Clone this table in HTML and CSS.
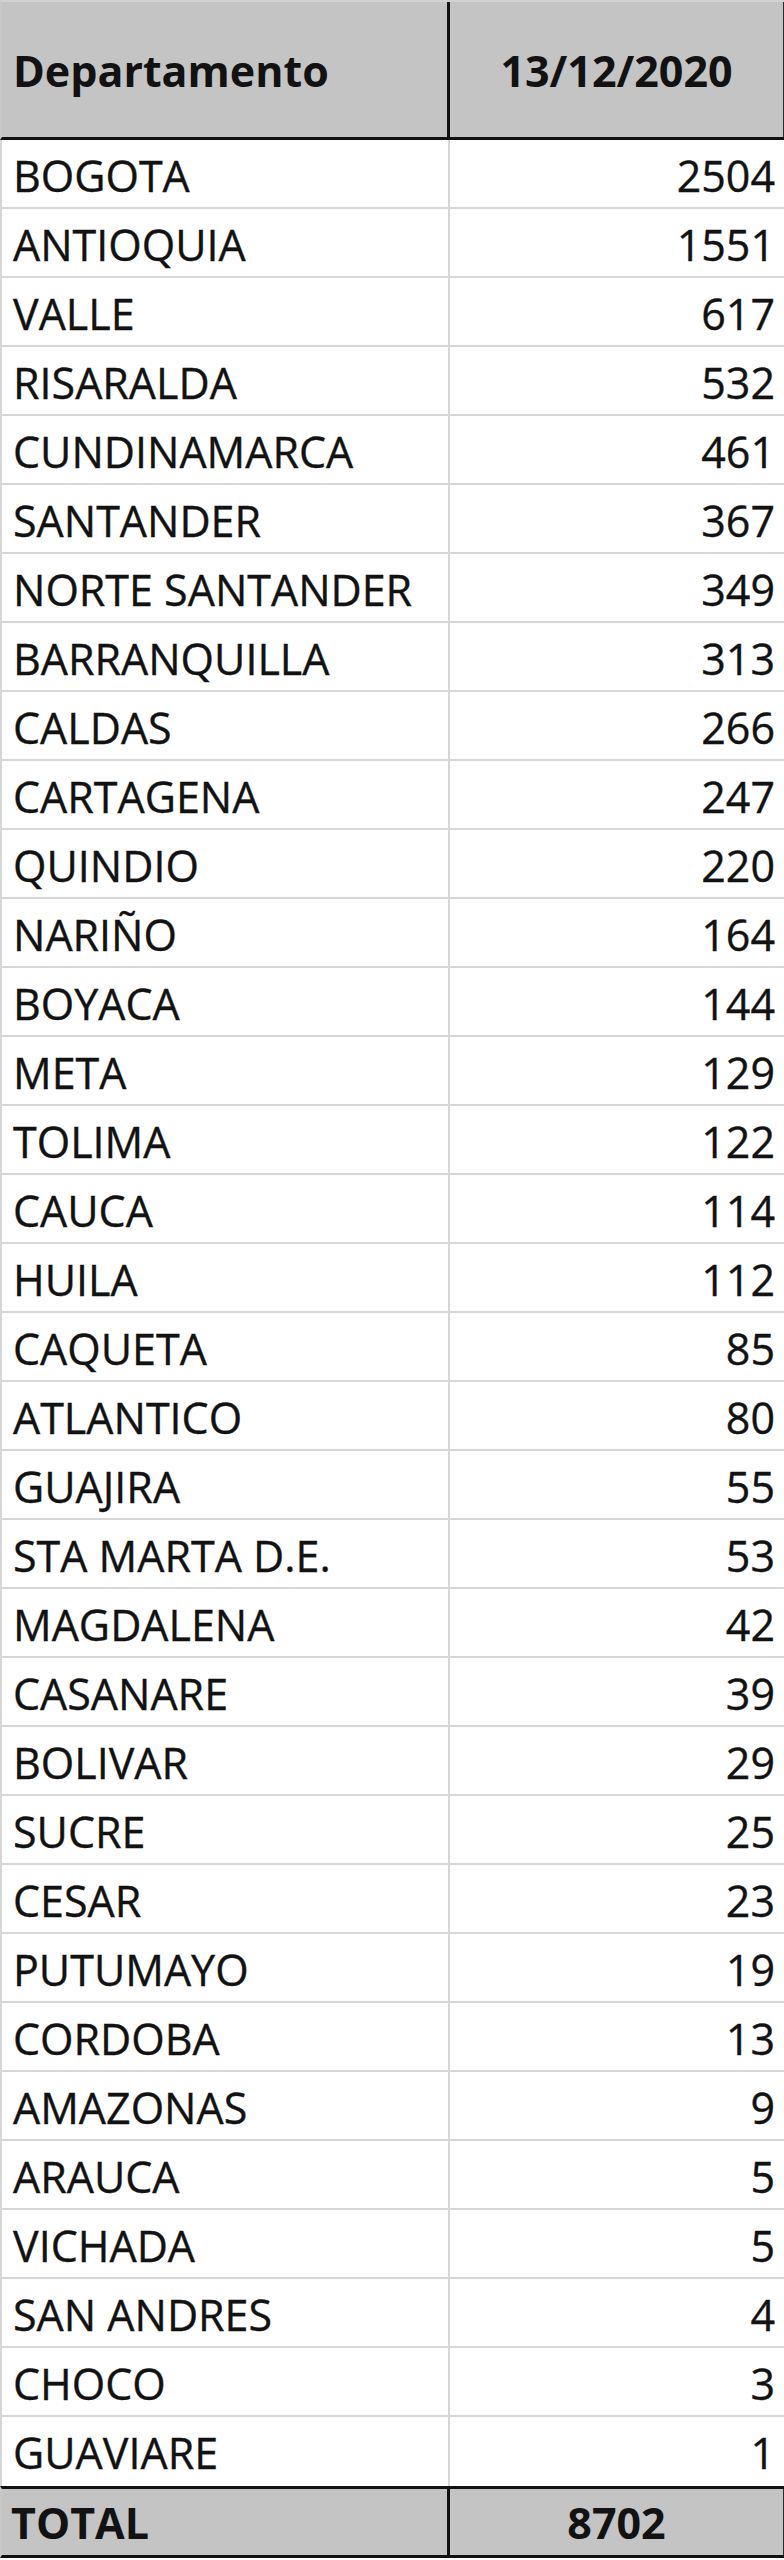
FILE: index.html
```html
<!DOCTYPE html>
<html lang="es">
<head>
<meta charset="utf-8">
<title>Departamento 13/12/2020</title>
<link rel="stylesheet" href="styles.css">
</head>
<body>
<div class="sheet">
  <div class="row head"><div class="cell name">Departamento</div><div class="cell val center">13/12/2020</div></div>
  <div class="row"><div class="cell name">BOGOTA</div><div class="cell val">2504</div></div>
  <div class="row"><div class="cell name">ANTIOQUIA</div><div class="cell val">1551</div></div>
  <div class="row"><div class="cell name">VALLE</div><div class="cell val">617</div></div>
  <div class="row"><div class="cell name">RISARALDA</div><div class="cell val">532</div></div>
  <div class="row"><div class="cell name">CUNDINAMARCA</div><div class="cell val">461</div></div>
  <div class="row"><div class="cell name">SANTANDER</div><div class="cell val">367</div></div>
  <div class="row"><div class="cell name">NORTE SANTANDER</div><div class="cell val">349</div></div>
  <div class="row"><div class="cell name">BARRANQUILLA</div><div class="cell val">313</div></div>
  <div class="row"><div class="cell name">CALDAS</div><div class="cell val">266</div></div>
  <div class="row"><div class="cell name">CARTAGENA</div><div class="cell val">247</div></div>
  <div class="row"><div class="cell name">QUINDIO</div><div class="cell val">220</div></div>
  <div class="row"><div class="cell name">NARIÑO</div><div class="cell val">164</div></div>
  <div class="row"><div class="cell name">BOYACA</div><div class="cell val">144</div></div>
  <div class="row"><div class="cell name">META</div><div class="cell val">129</div></div>
  <div class="row"><div class="cell name">TOLIMA</div><div class="cell val">122</div></div>
  <div class="row"><div class="cell name">CAUCA</div><div class="cell val">114</div></div>
  <div class="row"><div class="cell name">HUILA</div><div class="cell val">112</div></div>
  <div class="row"><div class="cell name">CAQUETA</div><div class="cell val">85</div></div>
  <div class="row"><div class="cell name">ATLANTICO</div><div class="cell val">80</div></div>
  <div class="row"><div class="cell name">GUAJIRA</div><div class="cell val">55</div></div>
  <div class="row"><div class="cell name">STA MARTA D.E.</div><div class="cell val">53</div></div>
  <div class="row"><div class="cell name">MAGDALENA</div><div class="cell val">42</div></div>
  <div class="row"><div class="cell name">CASANARE</div><div class="cell val">39</div></div>
  <div class="row"><div class="cell name">BOLIVAR</div><div class="cell val">29</div></div>
  <div class="row"><div class="cell name">SUCRE</div><div class="cell val">25</div></div>
  <div class="row"><div class="cell name">CESAR</div><div class="cell val">23</div></div>
  <div class="row"><div class="cell name">PUTUMAYO</div><div class="cell val">19</div></div>
  <div class="row"><div class="cell name">CORDOBA</div><div class="cell val">13</div></div>
  <div class="row"><div class="cell name">AMAZONAS</div><div class="cell val">9</div></div>
  <div class="row"><div class="cell name">ARAUCA</div><div class="cell val">5</div></div>
  <div class="row"><div class="cell name">VICHADA</div><div class="cell val">5</div></div>
  <div class="row"><div class="cell name">SAN ANDRES</div><div class="cell val">4</div></div>
  <div class="row"><div class="cell name">CHOCO</div><div class="cell val">3</div></div>
  <div class="row last"><div class="cell name">GUAVIARE</div><div class="cell val">1</div></div>
  <div class="row total"><div class="cell name">TOTAL</div><div class="cell val center">8702</div></div>
</div>
</body>
</html>
```

FILE: styles.css
```css
html, body {
  margin: 0;
  padding: 0;
  background: #ffffff;
}

.sheet {
  width: 784px;
  font-family: "Open Sans", "Liberation Sans", sans-serif;
  font-size: 43px;
  color: #121212;
  -webkit-text-stroke: 0.35px #121212;
}

.row {
  display: grid;
  grid-template-columns: 448px 336px;
  height: 69px;
  box-sizing: border-box;
  border-bottom: 2px solid #d7d7d7;
  border-left: 2px solid #d7d7d7;
}

.cell {
  box-sizing: border-box;
  padding-top: 6px;
  line-height: 60px;
  white-space: nowrap;
  overflow: hidden;
}

.name {
  padding-left: 11px;
  border-right: 2px solid #d7d7d7;
}

.val {
  text-align: right;
  padding-right: 9px;
  border-right: 2px solid #d7d7d7;
}

.center {
  text-align: center;
  padding-right: 0;
}

.head {
  height: 140px;
  background: #c4c4c4;
  border-top: 2px solid #d2d2d2;
  border-bottom: 3px solid #111111;
  border-left: 2px solid #c8c8c8;
  font-weight: 700;
  -webkit-text-stroke: 0;
}

.head .cell {
  padding-top: 6px;
  line-height: 126px;
}

.head .name {
  border-right: 3px solid #111111;
}

.head .val {
  border-right: 3px solid #2a2a2a;
}

.last {
  border-bottom: none;
}

.total {
  height: 71.5px;
  background: #c4c4c4;
  border-top: 3px solid #111111;
  border-bottom: 3px solid #111111;
  border-left: 2px solid #c8c8c8;
  font-weight: 700;
  -webkit-text-stroke: 0;
}

.total .cell {
  padding-top: 3px;
  line-height: 62px;
}

.total .name {
  padding-left: 9px;
  border-right: 3px solid #111111;
}

.total .val {
  border-right: 3px solid #2a2a2a;
}
```
